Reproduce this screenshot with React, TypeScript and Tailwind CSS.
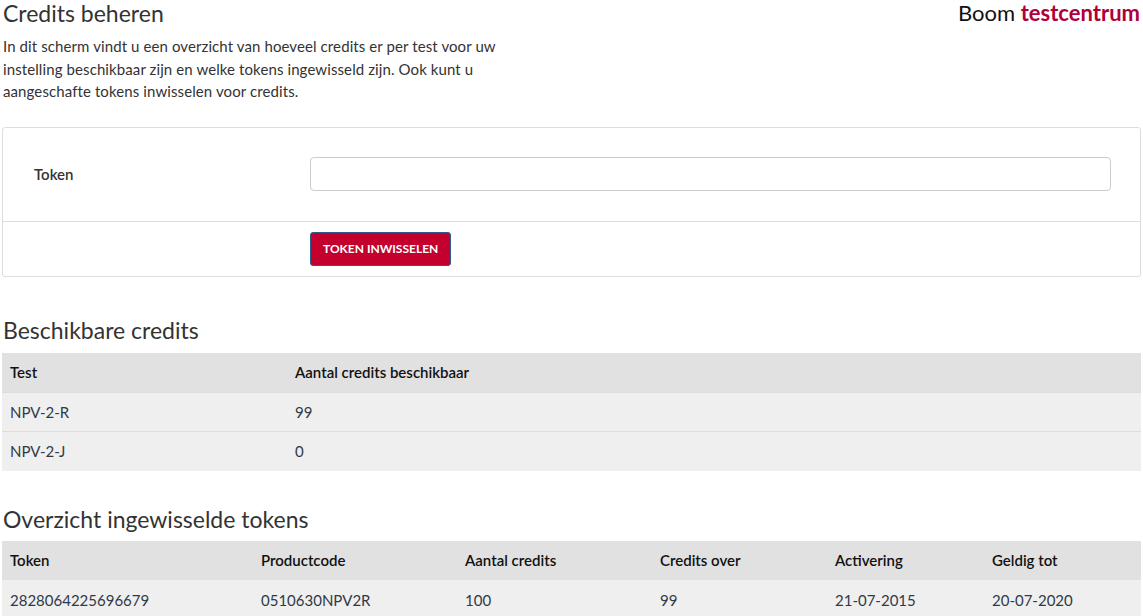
import React from "react"

const font = { fontFamily: "Lato, 'Open Sans', sans-serif" }

const credits = [
  { test: "NPV-2-R", aantal: "99" },
  { test: "NPV-2-J", aantal: "0" },
]

const tokens = [
  {
    token: "2828064225696679",
    productcode: "0510630NPV2R",
    aantal: "100",
    over: "99",
    activering: "21-07-2015",
    geldig: "20-07-2020",
  },
]

export default function App() {
  return (
    <div className="min-h-[616px] bg-white text-[#333] px-[2px]" style={font}>
      <div className="flex items-start justify-between">
        <div>
          <h1 className="text-[23px] leading-[26px] pt-[0px] pl-[1px] text-[#333]">Credits beheren</h1>
          <p className="text-[15px] leading-[22.5px] mt-[9px] pl-[1px] text-[#333] tracking-[0.1px]">
            In dit scherm vindt u een overzicht van hoeveel credits er per test voor uw
            <br />
            instelling beschikbaar zijn en welke tokens ingewisseld zijn. Ook kunt u
            <br />
            aangeschafte tokens inwisselen voor credits.
          </p>
        </div>
        <div className="text-[22px] leading-[26px] pt-[0px] pr-[1px] text-[#111]">
          Boom <span className="font-bold text-[#b0003a]">testcentrum</span>
        </div>
      </div>

      <div className="mt-[24px] border border-[#ddd] rounded-[3px]">
        <div className="flex items-center h-[94px] border-b border-[#ddd]">
          <label className="w-[307px] pl-[31px] text-[15px] font-semibold text-[#333]">Token</label>
          <input
            className="h-[34px] w-[801px] border border-[#ccc] rounded-[4px] px-3 text-[15px] outline-none"
            type="text"
          />
        </div>
        <div className="flex items-center h-[54px] pl-[307px]">
          <button className="h-[34px] px-[12px] bg-[#c4002f] border border-[#2d5d8f] rounded-[3px] text-white text-[12px] font-bold">
            TOKEN INWISSELEN
          </button>
        </div>
      </div>

      <h2 className="text-[23px] leading-[26px] mt-[40px] pl-[1px] text-[#333]">Beschikbare credits</h2>
      <table className="w-full table-fixed mt-[10px] text-[15px] border-collapse">
        <colgroup>
          <col className="w-[285px]" />
          <col />
        </colgroup>
        <thead>
          <tr className="bg-[#e1e1e1] h-[40px]">
            <th className="text-left font-semibold px-[8px] text-[#111]">Test</th>
            <th className="text-left font-semibold px-[8px] text-[#111]">Aantal credits beschikbaar</th>
          </tr>
        </thead>
        <tbody>
          {credits.map((row) => (
            <tr key={row.test} className="bg-[#efefef] h-[39px] border-t border-[#ddd]">
              <td className="px-[8px] text-[#2f3a48]">{row.test}</td>
              <td className="px-[8px] text-[#2f3a48]">{row.aantal}</td>
            </tr>
          ))}
        </tbody>
      </table>

      <h2 className="text-[23px] leading-[26px] mt-[35px] pl-[1px] text-[#333]">Overzicht ingewisselde tokens</h2>
      <table className="w-full table-fixed mt-[9px] text-[15px] border-collapse">
        <colgroup>
          <col className="w-[251px]" />
          <col className="w-[204px]" />
          <col className="w-[195px]" />
          <col className="w-[175px]" />
          <col className="w-[157px]" />
          <col />
        </colgroup>
        <thead>
          <tr className="bg-[#e1e1e1] h-[39px]">
            <th className="text-left font-semibold px-[8px] text-[#111]">Token</th>
            <th className="text-left font-semibold px-[8px] text-[#111]">Productcode</th>
            <th className="text-left font-semibold px-[8px] text-[#111]">Aantal credits</th>
            <th className="text-left font-semibold px-[8px] text-[#111]">Credits over</th>
            <th className="text-left font-semibold px-[8px] text-[#111]">Activering</th>
            <th className="text-left font-semibold px-[8px] text-[#111]">Geldig tot</th>
          </tr>
        </thead>
        <tbody>
          {tokens.map((row) => (
            <tr key={row.token} className="bg-[#efefef] h-[41px]">
              <td className="px-[8px] text-[#2f3a48]">{row.token}</td>
              <td className="px-[8px] text-[#2f3a48]">{row.productcode}</td>
              <td className="px-[8px] text-[#2f3a48]">{row.aantal}</td>
              <td className="px-[8px] text-[#2f3a48]">{row.over}</td>
              <td className="px-[8px] text-[#2f3a48]">{row.activering}</td>
              <td className="px-[8px] text-[#2f3a48]">{row.geldig}</td>
            </tr>
          ))}
        </tbody>
      </table>
    </div>
  )
}
